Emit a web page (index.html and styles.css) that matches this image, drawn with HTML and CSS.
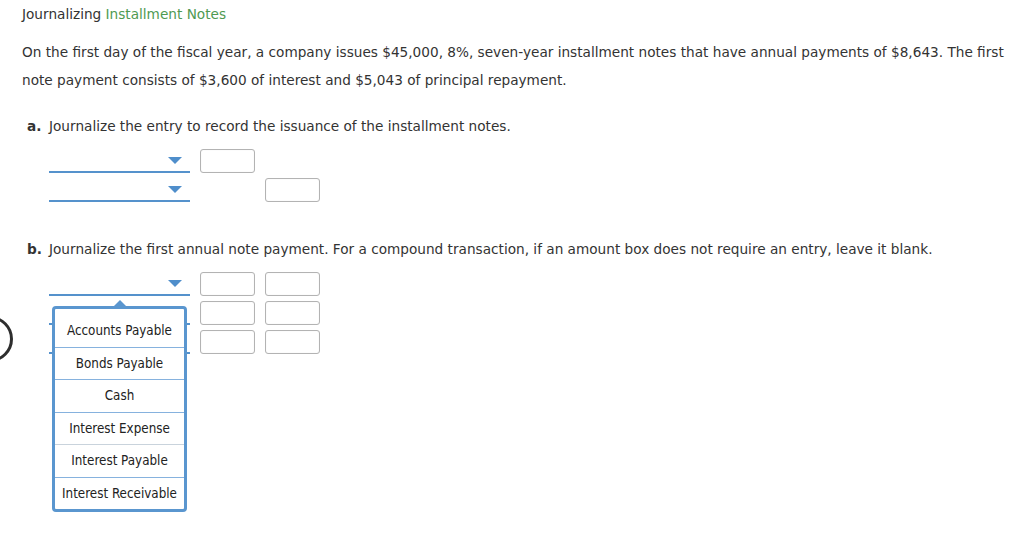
FILE: index.html
```html
<!DOCTYPE html>
<html>
<head>
<meta charset="utf-8">
<link rel="stylesheet" href="styles.css">
</head>
<body>
<div class="page">
  <div class="title">Journalizing <span class="green">Installment Notes</span></div>
  <p class="para">On the first day of the fiscal year, a company issues $45,000, 8%, seven-year installment notes that have annual payments of $8,643. The first note payment consists of $3,600 of interest and $5,043 of principal repayment.</p>

  <div class="q"><b>a.</b><span>Journalize the entry to record the issuance of the installment notes.</span></div>
  <div class="rows rows-a">
    <div class="row">
      <div class="dd"><span class="tri"></span></div>
      <div class="box"></div>
    </div>
    <div class="row">
      <div class="dd"><span class="tri"></span></div>
      <div class="box credit"></div>
    </div>
  </div>

  <div class="q q-b"><b>b.</b><span>Journalize the first annual note payment. For a compound transaction, if an amount box does not require an entry, leave it blank.</span></div>
  <div class="rows rows-b">
    <div class="row">
      <div class="dd"><span class="tri"></span></div>
      <div class="box"></div>
      <div class="box"></div>
    </div>
    <div class="row">
      <div class="dd"><span class="tri"></span></div>
      <div class="box"></div>
      <div class="box"></div>
    </div>
    <div class="row">
      <div class="dd"><span class="tri"></span></div>
      <div class="box"></div>
      <div class="box"></div>
    </div>
    <div class="popup">
      <span class="arrow"></span>
      <ul class="list">
        <li>Accounts Payable</li>
        <li>Bonds Payable</li>
        <li>Cash</li>
        <li class="gray">Interest Expense</li>
        <li>Interest Payable</li>
        <li>Interest Receivable</li>
      </ul>
    </div>
  </div>
  <div class="circle"></div>
</div>
</body>
</html>
```

FILE: styles.css
```css
html, body {
  margin: 0;
  padding: 0;
  background: #fff;
}
.page {
  position: relative;
  width: 1024px;
  height: 555px;
  overflow: hidden;
  padding: 4px 0 0 22px;
  box-sizing: border-box;
  font-family: "DejaVu Sans", Verdana, sans-serif;
  font-size: 13.65px;
  color: #333;
}
.title {
  line-height: 20px;
}
.green {
  color: #4f9a52;
}
.para {
  margin: 14px 0 0 0;
  line-height: 28px;
  width: 1000px;
}
.q {
  margin-top: 22px;
  line-height: 20px;
  padding-left: 5px;
  display: flex;
}
.q b {
  width: 22px;
  flex: none;
}
.q-b {
  margin-top: 37px;
}
.rows {
  margin-top: 13px;
  padding-left: 27px;
  display: flex;
  flex-direction: column;
  gap: 5px;
}
.rows-b {
  position: relative;
}
.row {
  display: flex;
  align-items: flex-start;
  height: 24px;
}
.dd {
  position: relative;
  width: 141px;
  height: 22px;
  border-bottom: 2px solid #5592cc;
  flex: none;
}
.tri {
  position: absolute;
  right: 8px;
  top: 8px;
  width: 0;
  height: 0;
  border-left: 7px solid transparent;
  border-right: 7px solid transparent;
  border-top: 7px solid #4f8ecb;
}
.box {
  width: 53px;
  height: 22px;
  border: 1px solid #b3b3b3;
  border-radius: 3px;
  box-shadow: inset 0 0 1px #ddd;
  margin-left: 10px;
  flex: none;
  background: #fff;
}
.box + .box {
  margin-left: 10px;
}
.box.credit {
  margin-left: 75px;
}
.popup {
  position: absolute;
  left: 30px;
  top: 34px;
  width: 129px;
  border: 3px solid #5a96cf;
  border-radius: 4px;
  background: #fff;
  font-family: "DejaVu Sans Condensed", "DejaVu Sans", sans-serif;
  font-size: 13.3px;
  color: #222;
}
.arrow {
  position: absolute;
  left: 59px;
  top: -9px;
  width: 0;
  height: 0;
  border-left: 6px solid transparent;
  border-right: 6px solid transparent;
  border-bottom: 6px solid #5a96cf;
}
.list {
  list-style: none;
  margin: 0;
  padding: 6px 0 0 0;
}
.list li {
  height: 31.5px;
  line-height: 31.5px;
  text-align: center;
  border-bottom: 1px solid #86b2de;
  white-space: nowrap;
}
.list li.gray {
  border-bottom-color: #c9d3dc;
}
.list li:last-child {
  border-bottom: none;
}
.circle {
  position: absolute;
  left: -33px;
  top: 316px;
  width: 40px;
  height: 40px;
  border: 3px solid #2e2e2e;
  border-radius: 50%;
}
```
